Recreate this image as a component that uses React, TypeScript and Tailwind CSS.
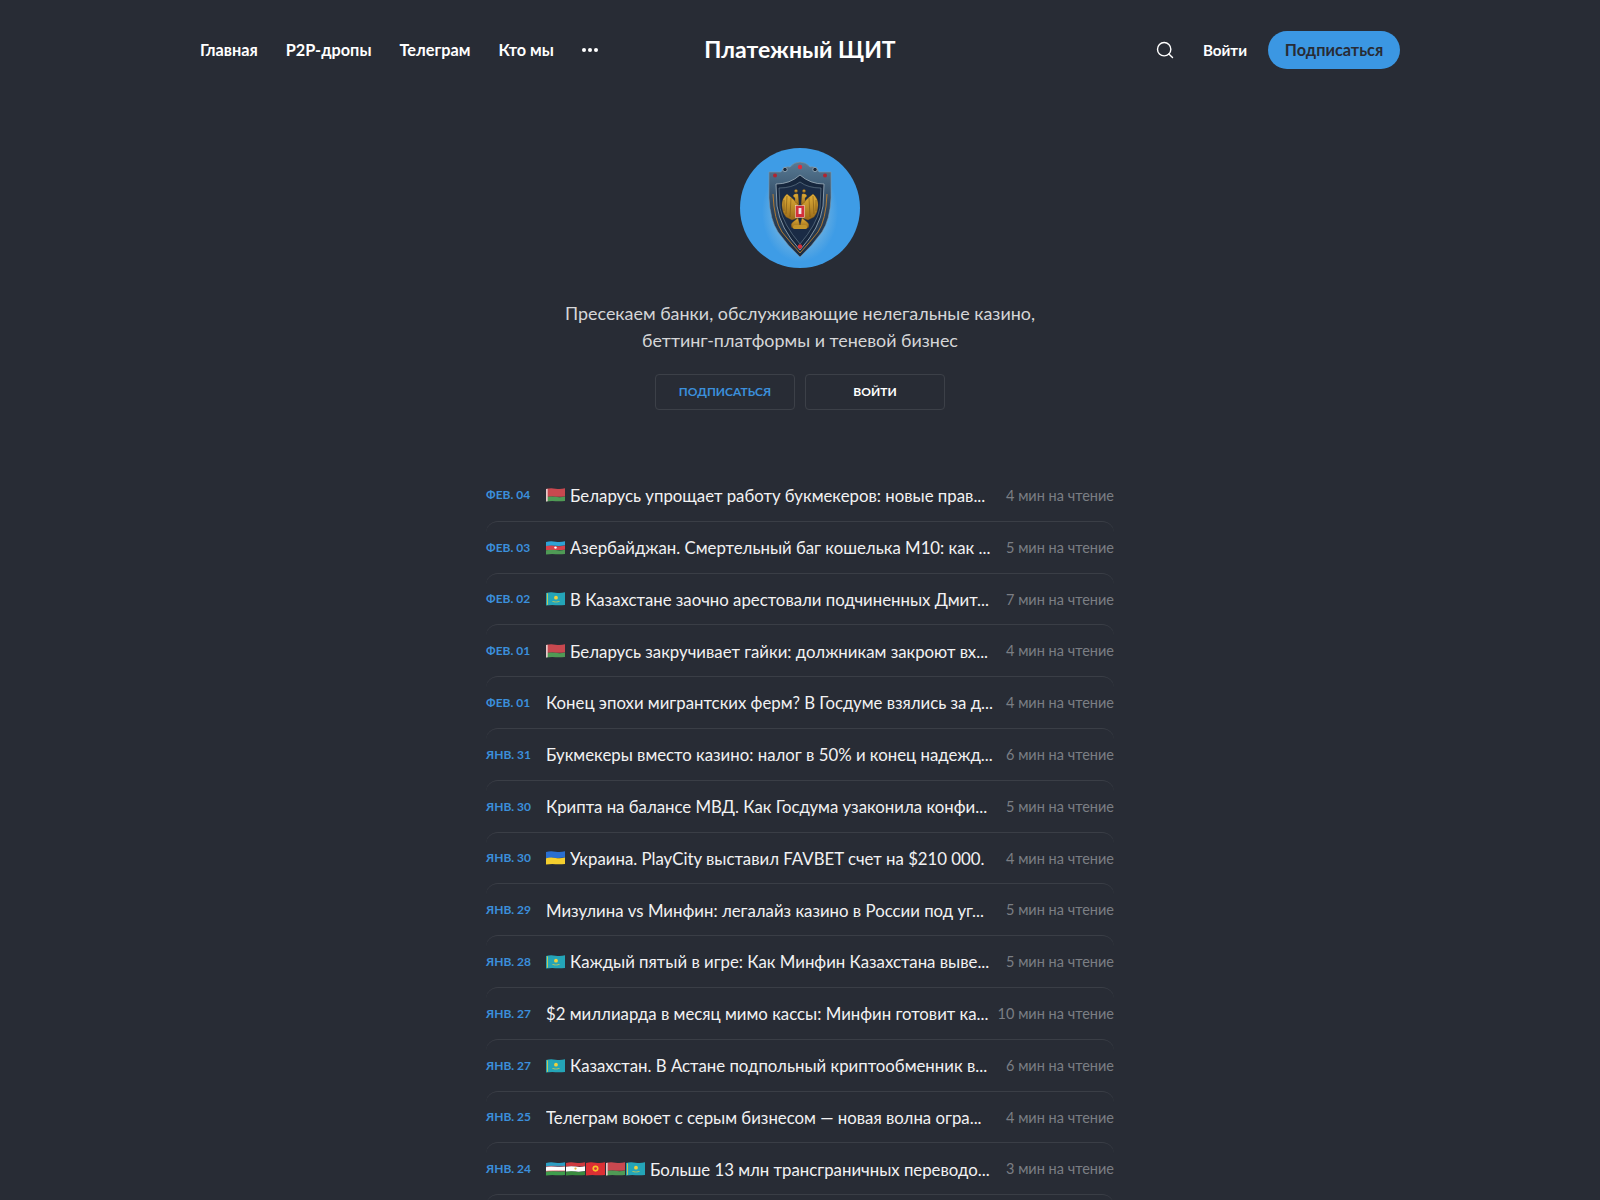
import React from 'react';
import { Search } from 'lucide-react';

type Stripe = { c: string; y: number; h: number };
type FlagCode = 'by' | 'az' | 'kz' | 'ua' | 'uz' | 'tj' | 'kg';

const wave = (y: number, h: number) =>
  `M0 ${y + 0.6} Q5 ${y - 0.5} 10 ${y + 0.4} T20 ${y} V${y + h} Q15 ${y + h + 0.6} 10 ${y + h + 0.3} T0 ${y + h + 0.6} Z`;

const stripes: Record<FlagCode, Stripe[]> = {
  by: [
    { c: '#c8484f', y: 1, h: 8.5 },
    { c: '#4f9a55', y: 9.5, h: 4.7 },
  ],
  az: [
    { c: '#2ea3d6', y: 1, h: 4.4 },
    { c: '#d9414b', y: 5.4, h: 4.4 },
    { c: '#4f9a55', y: 9.8, h: 4.4 },
  ],
  kz: [{ c: '#24a5b8', y: 1, h: 13.2 }],
  ua: [
    { c: '#2a6fd0', y: 1, h: 6.6 },
    { c: '#f5cf2e', y: 7.6, h: 6.6 },
  ],
  uz: [
    { c: '#2b9fc4', y: 1, h: 4.2 },
    { c: '#ffffff', y: 5.2, h: 4.8 },
    { c: '#3f9e4d', y: 10, h: 4.2 },
  ],
  tj: [
    { c: '#cf3a3f', y: 1, h: 4 },
    { c: '#ffffff', y: 5, h: 5.4 },
    { c: '#3a8c3f', y: 10.4, h: 3.8 },
  ],
  kg: [{ c: '#dc2f34', y: 1, h: 13.2 }],
};

const Flag = ({ code }: { code: FlagCode }) => (
  <svg viewBox="0 0 20 16" className="w-[19px] h-4 mr-px shrink-0">
    {stripes[code].map((s, i) => (
      <path key={i} d={wave(s.y, s.h)} fill={s.c} />
    ))}
    {code === 'by' && <path d="M0 1.6 L1.8 1.3 V14.6 L0 14.8 Z" fill="#e6c9c9" />}
    {code === 'az' && <circle cx="10" cy="7.6" r="1.3" fill="#fff" />}
    {code === 'kz' && (
      <>
        <circle cx="10.5" cy="6.6" r="2" fill="#f2d13a" />
        <path d="M6.5 10 Q10.5 11.6 14.5 10 L14 10.9 Q10.5 12 7 10.9 Z" fill="#f2d13a" />
        <path d="M1.6 2 V14.2" stroke="#f2d13a" strokeWidth="0.8" />
      </>
    )}
    {code === 'uz' && (
      <>
        <path d="M0 5.6 Q5 4.8 20 5.2" stroke="#d9414b" strokeWidth="0.6" fill="none" />
        <path d="M0 10.4 Q5 9.6 20 10" stroke="#d9414b" strokeWidth="0.6" fill="none" />
      </>
    )}
    {code === 'tj' && <circle cx="10" cy="7.6" r="1.2" fill="#e5b94a" />}
    {code === 'kg' && (
      <>
        <circle cx="10" cy="7.6" r="3.2" fill="#f6c22c" />
        <circle cx="10" cy="7.6" r="1.5" fill="#dc2f34" />
      </>
    )}
  </svg>
);

// feathers of the left wing, the right one is mirrored
const Wing = () => (
  <g fill="url(#gold)" stroke="#7a4f10" strokeWidth="0.3">
    <path d="M58 56 Q50 48 47 46 Q42 50 42 57 Q42 64 46 69 L52 72 L58 70 Z" />
    <path d="M47 48 L46 66" stroke="#6e4a10" fill="none" strokeWidth="0.5" />
    <path d="M51 50 L50 69" stroke="#6e4a10" fill="none" strokeWidth="0.5" />
    <path d="M44 52 L44 63" stroke="#6e4a10" fill="none" strokeWidth="0.5" />
    <path d="M58 46 Q54 45 53 48 L55 50 L55 54 L59 57 Z" />
    <circle cx="56" cy="43" r="1.6" />
    <path d="M52 80 Q50 76 53 74 L58 70 L60 78 Z" />
  </g>
);

const Shield = () => (
  <svg viewBox="0 0 120 120" className="w-[120px] h-[120px]">
    <defs>
      <radialGradient id="glow" cx="50%" cy="50%" r="50%">
        <stop offset="0.7" stopColor="#8fc0de" />
        <stop offset="1" stopColor="#3e9ce6" />
      </radialGradient>
      <linearGradient id="metal" x1="0" y1="0" x2="0" y2="1">
        <stop offset="0" stopColor="#587a94" />
        <stop offset="0.45" stopColor="#2f4760" />
        <stop offset="1" stopColor="#1a2a40" />
      </linearGradient>
      <linearGradient id="gold" x1="0" y1="0" x2="0" y2="1">
        <stop offset="0" stopColor="#e2b03a" />
        <stop offset="1" stopColor="#9a6a18" />
      </linearGradient>
    </defs>
    <circle cx="60" cy="60" r="60" fill="#3e9ce6" />
    <ellipse cx="60" cy="64" rx="38" ry="50" fill="url(#glow)" opacity="0.4" />
    <path
      d="M29 24 L41 24 Q44 18 50 19 Q54 14 60 14 Q66 14 70 19 Q76 18 79 24 L91 24 L91 50 Q90 72 82 84 Q72 98 60 109 Q48 98 38 84 Q30 72 29 50 Z"
      fill="url(#metal)"
      stroke="#7f98aa"
      strokeWidth="0.6"
    />
    <path d="M36 36 Q50 36 60 27 Q70 36 84 36 L83 58 Q80 80 60 102 Q40 80 37 58 Z" fill="#16263d" stroke="#9fb0bd" strokeWidth="0.8" />
    <path d="M39 40 Q52 40 60 34 Q68 40 81 40 L80 60 Q77 76 60 96 Q43 76 40 60 Z" fill="#1a2b45" stroke="#6f8496" strokeWidth="0.6" />
    <path d="M33 46 Q34 72 42 84 Q50 94 60 105 Q70 94 78 84 Q86 72 87 46" fill="none" stroke="#c07f2c" strokeWidth="0.9" />
    <Wing />
    <g transform="translate(120 0) scale(-1 1)">
      <Wing />
    </g>
    <rect x="55.5" y="57.5" width="9" height="12" fill="#d3303c" stroke="#e9dcc4" strokeWidth="0.6" />
    <rect x="58.6" y="60" width="2.8" height="6" fill="#f0e8e8" />
    <rect x="53" y="77" width="14" height="4" rx="1.5" fill="#c2942a" />
    <circle cx="60" cy="19" r="2.2" fill="#e02c3a" />
    <circle cx="60" cy="98.5" r="2.2" fill="#d5303a" />
    <circle cx="35" cy="27.5" r="2" fill="#b02430" />
    <circle cx="85" cy="27.5" r="2" fill="#b02430" />
    <circle cx="45" cy="21.5" r="2.2" fill="#1b2a3c" stroke="#9db1bf" strokeWidth="0.8" />
    <circle cx="75" cy="21.5" r="2.2" fill="#1b2a3c" stroke="#9db1bf" strokeWidth="0.8" />
  </svg>
);

const navItems = ['Главная', 'P2P-дропы', 'Телеграм', 'Кто мы'];

const posts: { date: string; flags?: FlagCode[]; title: string; time: number }[] = [
  { date: 'ФЕВ. 04', flags: ['by'], title: 'Беларусь упрощает работу букмекеров: новые прав...', time: 4 },
  { date: 'ФЕВ. 03', flags: ['az'], title: 'Азербайджан. Смертельный баг кошелька М10: как ...', time: 5 },
  { date: 'ФЕВ. 02', flags: ['kz'], title: 'В Казахстане заочно арестовали подчиненных Дмит...', time: 7 },
  { date: 'ФЕВ. 01', flags: ['by'], title: 'Беларусь закручивает гайки: должникам закроют вх...', time: 4 },
  { date: 'ФЕВ. 01', title: 'Конец эпохи мигрантских ферм? В Госдуме взялись за д...', time: 4 },
  { date: 'ЯНВ. 31', title: 'Букмекеры вместо казино: налог в 50% и конец надежд...', time: 6 },
  { date: 'ЯНВ. 30', title: 'Крипта на балансе МВД. Как Госдума узаконила конфи...', time: 5 },
  { date: 'ЯНВ. 30', flags: ['ua'], title: 'Украина. PlayCity выставил FAVBET счет на $210 000.', time: 4 },
  { date: 'ЯНВ. 29', title: 'Мизулина vs Минфин: легалайз казино в России под уг...', time: 5 },
  { date: 'ЯНВ. 28', flags: ['kz'], title: 'Каждый пятый в игре: Как Минфин Казахстана выве...', time: 5 },
  { date: 'ЯНВ. 27', title: '$2 миллиарда в месяц мимо кассы: Минфин готовит ка...', time: 10 },
  { date: 'ЯНВ. 27', flags: ['kz'], title: 'Казахстан. В Астане подпольный криптообменник в...', time: 6 },
  { date: 'ЯНВ. 25', title: 'Телеграм воюет с серым бизнесом — новая волна огра...', time: 4 },
  { date: 'ЯНВ. 24', flags: ['uz', 'tj', 'kg', 'by', 'kz'], title: 'Больше 13 млн трансграничных переводо...', time: 3 },
];

const App: React.FC = () => {
  return (
    <div className="h-[1200px] overflow-hidden bg-[#282c35] text-white font-['Lato','Noto_Sans',sans-serif]">
      {/* Header */}
      <header className="h-[100px] px-[200px] flex items-center">
        <nav className="flex-1 flex items-center gap-7 text-[16.3px] font-bold">
          {navItems.map(item => (
            <a key={item}>{item}</a>
          ))}
          <span className="flex gap-[2px]">
            <i className="w-1 h-1 rounded-full bg-white" />
            <i className="w-1 h-1 rounded-full bg-white" />
            <i className="w-1 h-1 rounded-full bg-white" />
          </span>
        </nav>
        <h1 className="text-[23px] font-bold -mt-[2px]">Платежный ЩИТ</h1>
        <div className="flex-1 flex items-center justify-end">
          <Search size={20} strokeWidth={1.7} />
          <a className="ml-7 text-[15.2px] font-bold">Войти</a>
          <button className="ml-[21px] w-[132px] h-[38px] rounded-full bg-[#3b97e3] text-[#282c35] text-[16.3px] font-bold">
            Подписаться
          </button>
        </div>
      </header>

      {/* Hero */}
      <section className="mt-12 flex flex-col items-center">
        <Shield />
        <p className="mt-8 text-[17.9px] leading-[27px] text-[#d5d6d8] text-center">
          Пресекаем банки, обслуживающие нелегальные казино,
          <br />
          беттинг-платформы и теневой бизнес
        </p>
        <div className="mt-5 flex gap-[10px] text-xs font-bold uppercase">
          <a className="w-[140px] h-[36px] flex items-center justify-center rounded-sm border border-[#3c4048] text-[#3b8fdb]">
            Подписаться
          </a>
          <a className="w-[140px] h-[36px] flex items-center justify-center rounded-sm border border-[#3c4048]">
            Войти
          </a>
        </div>
      </section>

      {/* Posts */}
      <ul className="w-[628px] mx-auto mt-[59px]">
        {posts.map((post, i) => (
          <li
            key={i}
            className={`h-[51.8px] pt-px flex items-center rounded-t-xl ${i > 0 ? 'border-t border-[#3a3e46]' : ''}`}
          >
            <span className="w-[60px] shrink-0 text-xs font-bold text-[#3b8fdb]">{post.date}</span>
            {post.flags?.map((f, j) => <Flag key={j} code={f} />)}
            <span className={`flex-1 min-w-0 truncate text-[16.8px] text-[#f2f2f3] ${post.flags ? 'ml-[4px]' : ''}`}>
              {post.title}
            </span>
            <span className="shrink-0 ml-2 text-[14.5px] text-[#7b7e84]">{post.time} мин на чтение</span>
          </li>
        ))}
        <li className="h-[30px] border-t border-[#3a3e46] rounded-t-xl" />
      </ul>
    </div>
  );
};

export default App;
